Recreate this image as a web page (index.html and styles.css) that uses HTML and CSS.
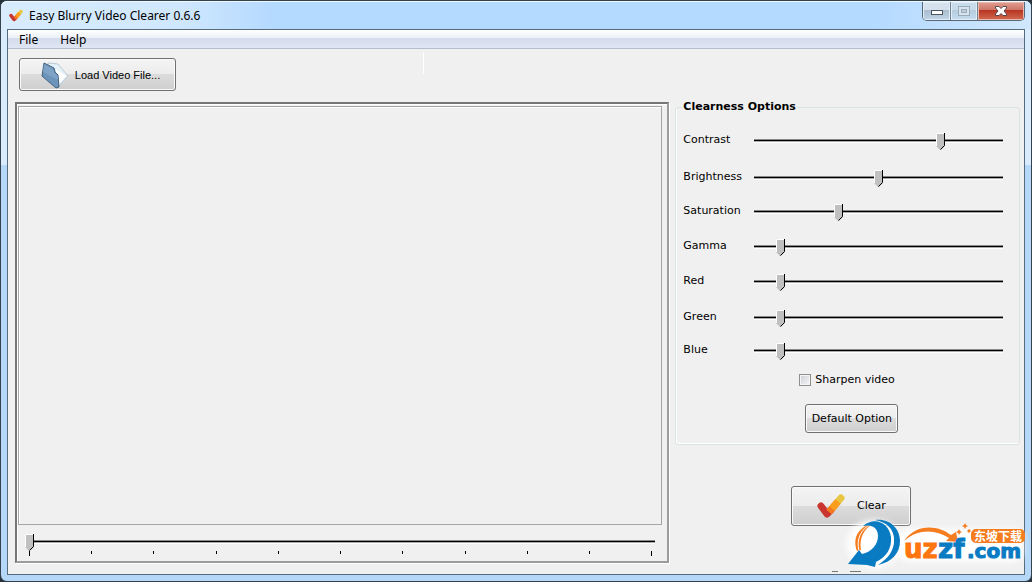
FILE: index.html
```html
<!DOCTYPE html>
<html lang="en">
<head>
<meta charset="utf-8">
<title>Easy Blurry Video Clearer 0.6.6</title>
<link rel="stylesheet" href="styles.css">
</head>
<body>
<div class="window">
  <header class="titlebar">
    <svg class="app-icon" viewBox="0 0 28 26" aria-hidden="true"><use href="#tick"/></svg>
    <h1 class="title">Easy Blurry Video Clearer 0.6.6</h1>
    <div class="caption-buttons">
      <button class="caption" type="button" aria-label="Minimize"><svg width="14" height="8" viewBox="0 0 14 8"><rect x="1.500" y="1.500" width="11" height="4" fill="#fff" stroke="#4a5560"/></svg></button>
      <button class="caption caption-max" type="button" aria-label="Maximize" disabled><svg width="12" height="10" viewBox="0 0 12 10"><rect x=".5" y=".5" width="11" height="9" fill="#d8e3ee" stroke="#9aabba"/><rect x="3.500" y="3.500" width="5" height="3" fill="#bccbd9" stroke="#9aabba"/></svg></button>
      <button class="caption caption-close" type="button" aria-label="Close"><svg width="14" height="12" viewBox="0 0 14 12"><path d="M1.500 1.500H5L7 3.500l2-2h3.500V3L10 6l2.500 3v1.500H9l-2-2-2 2H1.500V9L4 6 1.500 3z" fill="#fff" stroke="#59444a"/></svg></button>
    </div>
  </header>
  <div class="client">
    <nav class="menu">
      <button class="menu-item" type="button">File</button>
      <button class="menu-item" type="button">Help</button>
    </nav>
    <div class="toolbar">
      <button class="button load" type="button">
        <svg width="28" height="28" viewBox="0 0 28 28" aria-hidden="true">
          <path d="M7 2l10 1 10 12-11 12L8 20z" fill="#e6f1f8" stroke="#b9cad7"/>
          <path d="M15 8l10 7-8 9z" fill="#fff"/>
          <path d="M3 2l10 5 1 4 3 3 1 12-3 1L1 15z" fill="#6c94bb" stroke="#40617f" stroke-linejoin="round"/>
          <path d="M3 3l9 5 1 4 4 3v4L2 11z" fill="#8fb2d2" opacity=".5"/>
        </svg>
        <span>Load Video File...</span>
      </button>
      <span class="divider"></span>
    </div>
    <main class="content">
      <section class="player">
        <div class="screen"></div>
        <div class="seek">
          <input class="slider" type="range" min="0" max="100" value="0" aria-label="Position">
          <div class="ticks"><i></i><i></i><i></i><i></i><i></i><i></i><i></i><i></i><i></i><i></i><i></i></div>
        </div>
      </section>
      <aside class="side">
        <fieldset class="options">
          <legend>Clearness Options</legend>
          <div class="levels">
            <label for="contrast">Contrast</label><input class="slider" id="contrast" type="range" min="0" max="240" value="182">
            <label for="brightness">Brightness</label><input class="slider" id="brightness" type="range" min="0" max="240" value="120">
            <label for="saturation">Saturation</label><input class="slider" id="saturation" type="range" min="0" max="240" value="80">
            <label for="gamma">Gamma</label><input class="slider" id="gamma" type="range" min="0" max="240" value="22">
            <label for="red">Red</label><input class="slider" id="red" type="range" min="0" max="240" value="22">
            <label for="green">Green</label><input class="slider" id="green" type="range" min="0" max="240" value="22">
            <label for="blue">Blue</label><input class="slider" id="blue" type="range" min="0" max="240" value="22">
          </div>
          <div class="extras">
            <label class="sharpen"><input class="check" type="checkbox">Sharpen video</label>
            <button class="button default" type="button">Default Option</button>
          </div>
        </fieldset>
        <button class="button clear" type="button">
          <svg width="28" height="26" viewBox="0 0 28 26" aria-hidden="true">
            <g id="tick" fill="none" stroke-width="7">
              <path d="M4 13l6 8 4-4" stroke="#c93430" stroke-linecap="round" stroke-linejoin="round"/>
              <path d="M12 19L18 12" stroke="#f47a20"/>
              <path d="M15 15.500l6-7" stroke="#fa9d1c"/>
              <path d="M20 9.500L24 5" stroke="#e8c641" stroke-linecap="round"/>
              <path d="M17 13l4-4.500" stroke="#fa9d1c"/>
            </g>
          </svg>
          <span>Clear</span>
        </button>
      </aside>
    </main>
  </div>
  <svg class="watermark" width="190" height="60" viewBox="0 0 190 60" role="img" aria-label="uzzf.com">
    <defs><filter id="halo" x="-20%" y="-20%" width="140%" height="140%"><feGaussianBlur stdDeviation="3"/></filter></defs>
    <g filter="url(#halo)" fill="#fff"><ellipse cx="33" cy="27" rx="27" ry="24"/><rect x="58" y="12" width="124" height="33" rx="10"/></g>
    <path d="M16 34C11 20 18 10 32 6 22 13 18 22 20 33z" fill="#f57d20"/>
    <path d="M18 34C15 22 20 12 30 7" fill="none" stroke="#fff"/>
    <path d="M22 9C34-1 48 6 50 20c1 12-5 20-15 25l-1 5-8-2-19-1 11-14 3 4c10-2 16-10 16-18C37 11 31 7 22 9z" fill="#087bc3"/>
    <path d="M34 3C48 1 59 11 59 24c0 12-8 21-22 24 11-7 16-15 16-25C53 12 46 5 34 3z" fill="#087bc3"/>
    <path d="M36 46C50 39 55 27 51 16" fill="none" stroke="#fff"/>
    <path d="M63 24C74 7 96 7 110 18l5-3 2 10-12-1 3-3C94 12 77 12 63 24z" fill="#f57d20"/>
    <g class="mark-text">
      <text class="mark-orange" x="63" y="41">uz</text>
      <text x="97" y="41">zf</text>
      <text class="mark-com" x="126" y="41">.com</text>
    </g>
    <rect x="130" y="12" width="54" height="14" rx="5" fill="#f57d20"/>
    <text class="mark-cn" x="133" y="24">东坡下载</text>
    <path d="M124 6l1 2 2 1-2 1-1 2-1-2-2-1 2-1zM118 12l1 2 2 1-2 1-1 2-1-2-2-1 2-1zM128 12l1 1 1 1-1 1-1 1-1-1-1-1 1-1z" fill="#f57d20"/>
    <path d="M-9 54.500h6M9 54.500h11" stroke="#777"/>
  </svg>
</div>
</body>
</html>
```
FILE: styles.css
```css
* { box-sizing: border-box; }
body {
  margin: 0;
  background: #26323c;
  color: #000;
  font: 11px/16px "DejaVu Sans", Verdana, sans-serif;
}
button, input { font: inherit; color: inherit; margin: 0; }
.window {
  position: relative;
  display: flex;
  flex-direction: column;
  min-height: 100vh;
  padding: 0 6px 6px;
  border: 1px solid #34424e;
  border-radius: 7px;
  background: linear-gradient(#d9ecfd 0 164px, #b5d8f8 164px);
}
.titlebar {
  display: flex;
  align-items: center;
  height: 28px;
  margin: 0 -6px;
  padding-left: 8px;
  border-radius: 6px 6px 0 0;
  border-top: 1px solid #eff8ff;
  background: linear-gradient(90deg, #d8ecfd, #cfe7fd 180px, #b5daff 270px, #b5daff 85%, #d0e7fc);
}
.app-icon { width: 14px; height: 13px; margin-right: 6px; }
.title {
  flex: 1;
  margin: 0;
  font: 12px/16px "Noto Sans", "Segoe UI", sans-serif;
}
.caption-buttons {
  align-self: flex-start;
  display: flex;
  height: 19px;
  margin-right: 6px;
  border: 1px solid #56697a;
  border-top: 0;
  border-radius: 0 0 5px 5px;
  overflow: hidden;
}
.caption {
  display: grid;
  place-items: center;
  width: 28px;
  padding: 4px 0 0;
  border: 0;
  border-right: 1px solid #6f8496;
  background: linear-gradient(#d5e2ee 45%, #aabccd 45%, #c1d6e8);
  box-shadow: inset 0 0 0 1px #e3edf6;
}
.caption-max { width: 27px; padding: 0; background: linear-gradient(#c9dcec 45%, #b5cadd 45%, #c6ddf0); }
.caption-close {
  width: 46px;
  padding: 0;
  border-right: 0;
  background: linear-gradient(#e0a093, #cd7465 45%, #b83322 45%, #d06b50);
  box-shadow: inset 0 0 0 1px #edb8ac;
}
.client {
  flex: 1;
  display: flex;
  flex-direction: column;
  border: 1px solid #566b7d;
  background: #f0f0f0;
}
.menu {
  display: flex;
  height: 19px;
  border-bottom: 1px solid #b6bccc;
  background: linear-gradient(#fff, #eaf0f8 8px, #d4dcec 8px, #dfe5f3);
}
.menu-item {
  padding: 0 11px;
  border: 0;
  background: none;
  font: 12px/19px "Noto Sans", "Segoe UI", sans-serif;
}
.toolbar {
  display: flex;
  padding: 9px 11px 11px;
}
.button {
  display: flex;
  align-items: center;
  justify-content: center;
  padding: 0;
  border: 1px solid #707070;
  border-radius: 3px;
  background: linear-gradient(#f4f4f4, #ececec 49%, #dcdcdc 50%, #cecece);
  box-shadow: inset 0 0 0 1px #fafafa;
}
.load {
  width: 157px;
  height: 33px;
  gap: 6px;
  padding-left: 6px;
  font: 11px/16px "Liberation Sans", Arial, sans-serif;
}
.divider {
  width: 1px;
  height: 22px;
  margin: -6px 0 0 247px;
  background: #fff;
}
.content {
  flex: 1;
  display: grid;
  grid-template-columns: minmax(0, 655fr) minmax(0, 345fr);
  gap: 6px;
  padding: 0 4px 11px 7px;
}
.player {
  display: flex;
  flex-direction: column;
  padding: 2px 5px 0 1px;
  border: 2px solid #767676;
  border-right-color: #9c9c9c;
  border-bottom-color: #9c9c9c;
  box-shadow: inset 1px 1px #fff, 1px 1px #fff;
}
.screen {
  flex: 1;
  border: 1px solid #a5a5a5;
  box-shadow: inset 1px 1px #fff;
}
.seek { padding: 7px 7px 5px 7px; }
.seek .slider { display: block; }
.ticks {
  display: flex;
  justify-content: space-between;
  height: 5px;
  padding: 0 3px 0 4px;
}
.ticks i { width: 1px; height: 3px; background: #000; }
.ticks i:first-child, .ticks i:last-child { height: 5px; }
.slider {
  appearance: none;
  width: 100%;
  height: 19px;
  background: none;
}
.slider::-webkit-slider-runnable-track {
  height: 4px;
  background: linear-gradient(#888 0 1px, #000 1px 2px, #aaa 2px 3px, #fff 3px);
}
.slider::-webkit-slider-thumb {
  appearance: none;
  width: 9px;
  height: 17px;
  margin-top: -6px;
  background: url("data:image/svg+xml,%3Csvg xmlns='http://www.w3.org/2000/svg' width='9' height='17'%3E%3Cpath d='M0 0h9v13l-4 4h-1l-4-4z' fill='%23c0c0c0'/%3E%3Cpath d='M.5 13V.5H8' fill='none' stroke='%23fff'/%3E%3Cpath d='M8.500 0v12.500l-4 4' fill='none' stroke='%23000'/%3E%3C/svg%3E");
}
.side { display: flex; flex-direction: column; }
.options {
  min-width: 0;
  margin: -3px 0 0;
  padding: 6px 16px 11px 6px;
  border: 1px solid #dce3e5;
  border-radius: 3px;
  box-shadow: inset 1px -1px #fff;
}
.options legend { padding: 0 1px; font-weight: bold; }
.levels {
  display: grid;
  grid-template-columns: 71px 1fr;
  grid-template-rows: 38px 36px 32px 38px 32px 40px 26px;
  align-items: center;
  padding-left: 1px;
}
.levels .slider { margin-top: 2px; }
.extras {
  display: grid;
  gap: 16px;
  padding: 9px 0 0 117px;
}
.sharpen { display: flex; align-items: center; gap: 4px; }
.check {
  appearance: none;
  width: 12px;
  height: 12px;
  border: 1px solid #8e8f8f;
  background: linear-gradient(135deg, #cbcfd5, #f6f6f6);
  box-shadow: inset 0 0 0 1px #f4f4f4;
}
.default { width: 93px; height: 29px; margin-left: 6px; }
.clear {
  width: 120px;
  height: 40px;
  margin: 41px 0 0 116px;
  gap: 12px;
}
.watermark {
  position: absolute;
  right: 0;
  bottom: 4px;
  overflow: visible;
  pointer-events: none;
}
.mark-text {
  font: bold 26px "DejaVu Sans", sans-serif;
  fill: #087bc3;
  stroke: #087bc3;
  stroke-width: 1px;
}
.mark-orange { fill: #ff7610; stroke: #ff7610; }
.mark-com { font-size: 20px; }
.mark-cn { font: bold 12px "Noto Sans CJK SC", sans-serif; fill: #fff; }
```
